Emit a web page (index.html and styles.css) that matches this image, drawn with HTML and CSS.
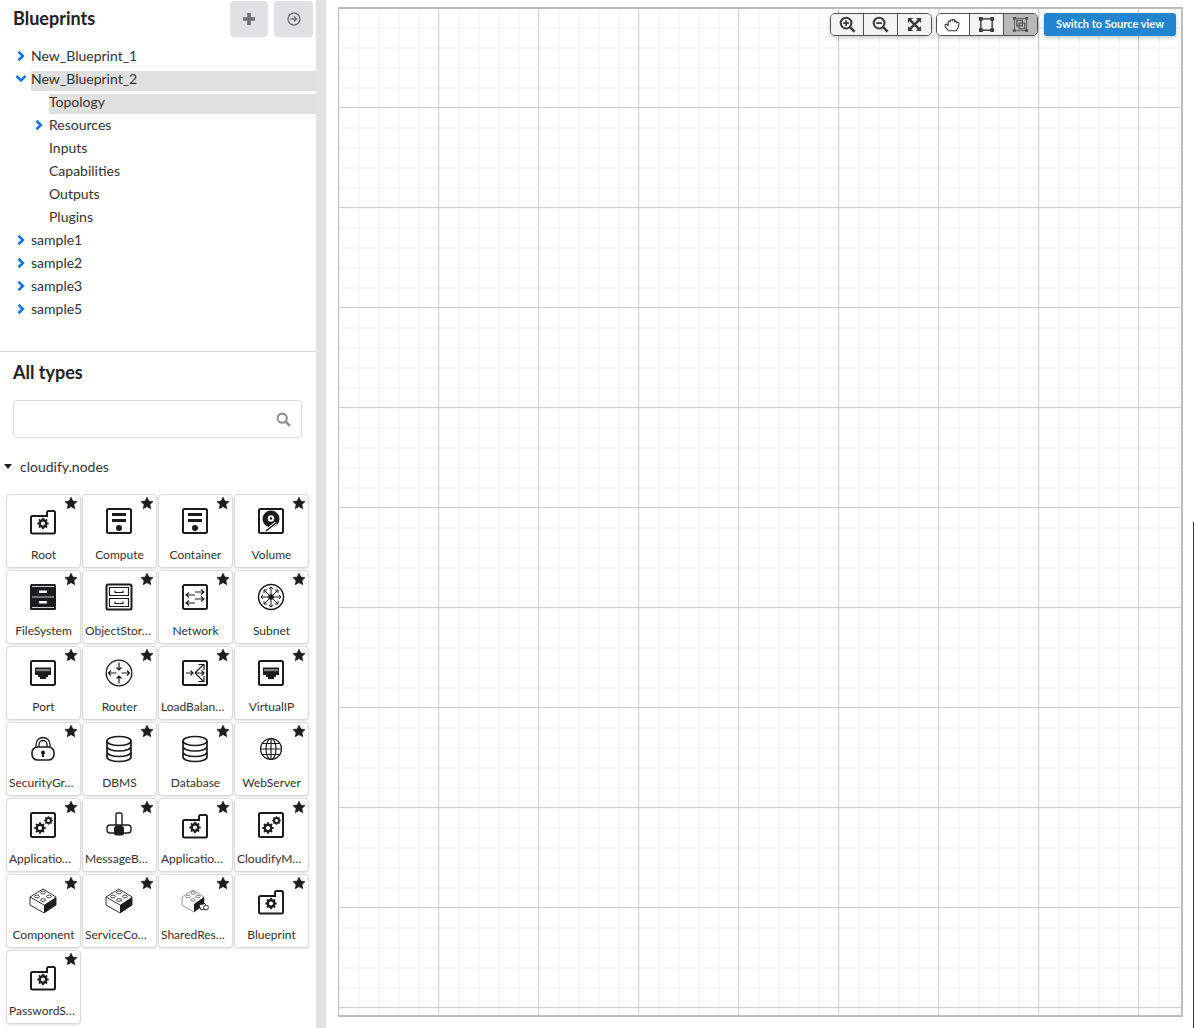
FILE: index.html
```html
<!DOCTYPE html>
<html lang="en">
<head>
    <meta charset="UTF-8">
    <title>Blueprints</title>
    <link rel="stylesheet" href="styles.css">
</head>
<body>
    <svg class="defs" width="0" height="0">
        <defs>
            <symbol id="star" viewBox="0 0 14 14"><path d="M7 1.200 8.800 5.100l4.200.5-3.100 2.900.8 4.200L7 10.600l-3.700 2.100.8-4.200L1 5.600l4.200-.5z" fill="#1b1c1d" stroke="#1b1c1d" stroke-width=".7" stroke-linejoin="round"/></symbol>
            <symbol id="chev-r" viewBox="0 0 10 12"><path d="M2.500 1.800 6.800 6l-4.300 4.200" fill="none" stroke="#1078e0" stroke-width="2.600"/></symbol>
            <symbol id="chev-d" viewBox="0 0 12 10"><path d="M1.500 2 6 6.500 10.500 2" fill="none" stroke="#1078e0" stroke-width="2.600"/></symbol>
            <symbol id="gear" viewBox="0 0 12 12"><circle cx="6" cy="6" r="3" fill="none" stroke="#1b1c1d" stroke-width="2.200"/><path d="M6 .8v2M6 9.200v2M.8 6h2M9.200 6h2M2.300 2.300l1.500 1.500M8.200 8.200l1.500 1.500M2.300 9.700l1.500-1.500M8.200 3.800l1.500-1.500" stroke="#1b1c1d" stroke-width="1.700"/></symbol>
            <symbol id="i-folder" viewBox="0 0 28 28"><path d="M2 10.500Q2 9 3.500 9H18V5.500Q18 4 19.500 4h5Q26 4 26 5.500v20q0 1-1.500 1h-21Q2 26.500 2 25z" fill="none" stroke="#1b1c1d" stroke-width="2"/><use href="#gear" x="7.500" y="10" width="13" height="13"/></symbol>
            <symbol id="i-compute" viewBox="0 0 28 28"><rect x="2" y="2" width="24" height="24" rx="1.500" fill="none" stroke="#1b1c1d" stroke-width="2"/><path d="M7 6h14v3H7zM7 12h14v3H7z" fill="#1b1c1d"/><circle cx="14" cy="21" r="3" fill="#1b1c1d"/></symbol>
            <symbol id="i-volume" viewBox="0 0 28 28"><rect x="2" y="2" width="24" height="24" rx="1.500" fill="none" stroke="#1b1c1d" stroke-width="2"/><circle cx="14" cy="12" r="8.500" fill="#1b1c1d"/><circle cx="14" cy="11.500" r="3.200" fill="#fff"/><circle cx="14" cy="11.500" r="1.200" fill="#1b1c1d"/><path d="M19 16 9 24" stroke="#fff" stroke-width="3.400"/><path d="M19 16 9 24" stroke="#1b1c1d" stroke-width="1.600"/></symbol>
            <symbol id="i-files" viewBox="0 0 28 28"><rect x="1" y="1" width="26" height="26" rx="1.500" fill="#1b1c1d"/><path d="M3 3.500h22M3 14h22M3 24.500h22" stroke="#fff" stroke-width=".8"/><path d="M10 7.500h8V10h-8zM10 18h8v2.500h-8z" fill="#fff"/></symbol>
            <symbol id="i-store" viewBox="0 0 28 28"><rect x="1.500" y="1.500" width="25" height="25" rx="1.500" fill="none" stroke="#1b1c1d" stroke-width="2"/><path d="M4.500 4.500h19v8h-19zM4.500 15.500h19v8h-19z" fill="none" stroke="#1b1c1d" stroke-width="1.200"/><path d="M10 7.500v2h8v-2M10 18.500v2h8v-2" fill="none" stroke="#1b1c1d" stroke-width="1.200"/></symbol>
            <symbol id="i-network" viewBox="0 0 28 28"><rect x="2" y="2" width="24" height="24" rx="1.500" fill="none" stroke="#1b1c1d" stroke-width="2"/><path d="M14 9h9M20 6.500 23 9l-3 2.500M14 12H5M8 9.500 5 12l3 2.500M14 16h9M20 13.500l3 2.500-3 2.500M14 20H5M8 17.500 5 20l3 2.500" fill="none" stroke="#1b1c1d" stroke-width="1.100"/></symbol>
            <symbol id="i-subnet" viewBox="0 0 28 28"><circle cx="14" cy="14" r="12.500" fill="none" stroke="#1b1c1d" stroke-width="1.500"/><circle cx="14" cy="14" r="2.800" fill="#1b1c1d"/><path d="M14 4v20M4 14h20M7 7l14 14M21 7 7 21M12 6l2-2 2 2M12 22l2 2 2-2M6 12l-2 2 2 2M22 12l2 2-2 2M7 10V7h3M21 10V7h-3M7 18v3h3M21 18v3h-3" fill="none" stroke="#1b1c1d"/></symbol>
            <symbol id="i-port" viewBox="0 0 28 28"><rect x="2" y="2" width="24" height="24" rx="1.500" fill="none" stroke="#1b1c1d" stroke-width="2"/><path d="M6 8.500h16v7.500h-3v2h-2v2h-6v-2H9v-2H6z" fill="#1b1c1d"/><path d="M8 10v2.200M10 10v2.200M12 10v2.200M14 10v2.200M16 10v2.200M18 10v2.200M20 10v2.200" stroke="#fff" stroke-width=".9"/></symbol>
            <symbol id="i-router" viewBox="0 0 28 28"><circle cx="14" cy="14" r="12.800" fill="none" stroke="#1b1c1d" stroke-width="1.300"/><path d="M14 3.500V11M11.500 8.500 14 11l2.500-2.500M14 24.500V17M11.500 19.500 14 17l2.500 2.500M11.500 14H3.500M6 11.500 3.500 14 6 16.500M16.500 14h8M22 11.500l2.500 2.500-2.500 2.500" fill="none" stroke="#1b1c1d" stroke-width="1.200"/></symbol>
            <symbol id="i-lb" viewBox="0 0 28 28"><rect x="2" y="2" width="24" height="24" rx="1.500" fill="none" stroke="#1b1c1d" stroke-width="2"/><path d="M5 14h7M9.500 11.500 12 14l-2.500 2.500M14 14l8-8M17.500 5.500H23V11M14 14h9M20.500 11.500 23 14l-2.500 2.500M14 14l8 8M17.500 22.500H23V17" fill="none" stroke="#1b1c1d" stroke-width="1.200"/></symbol>
            <symbol id="i-lock" viewBox="0 0 28 28"><rect x="3" y="12" width="22" height="13" rx="5.500" fill="none" stroke="#1b1c1d" stroke-width="1.600"/><path d="M7 12V9.500a7 7 0 0 1 14 0V12M10 12V9.500a4 4 0 0 1 8 0V12" fill="none" stroke="#1b1c1d" stroke-width="1.300"/><circle cx="14" cy="17.500" r="2" fill="#1b1c1d"/><path d="M13 18h2v4h-2z" fill="#1b1c1d"/></symbol>
            <symbol id="i-db" viewBox="0 0 28 28"><g fill="none" stroke="#1b1c1d" stroke-width="1.700"><ellipse cx="14" cy="6" rx="12" ry="4.500"/><path d="M2 6v16c0 2.500 5.400 4.500 12 4.500S26 24.500 26 22V6M2 11.500c0 2.500 5.400 4.500 12 4.500s12-2 12-4.500M2 17c0 2.500 5.400 4.500 12 4.500S26 19.500 26 17"/></g></symbol>
            <symbol id="i-web" viewBox="0 0 28 28"><g fill="none" stroke="#1b1c1d" stroke-width="1.200"><circle cx="14" cy="14" r="10.500"/><ellipse cx="14" cy="14" rx="5" ry="10.500"/><path d="M14 3.500v21M3.500 14h21M5 8.500h18M5 19.500h18"/></g></symbol>
            <symbol id="i-app" viewBox="0 0 28 28"><rect x="2" y="2" width="24" height="24" rx="1.500" fill="none" stroke="#1b1c1d" stroke-width="2"/><use href="#gear" x="4.500" y="10.500" width="13" height="13"/><use href="#gear" x="14.500" y="4.500" width="10" height="10"/></symbol>
            <symbol id="i-broker" viewBox="0 0 28 28"><rect x="11" y="2" width="6" height="13" rx="1.500" fill="none" stroke="#1b1c1d" stroke-width="1.400"/><rect x="2" y="14" width="24" height="8" rx="3" fill="none" stroke="#1b1c1d" stroke-width="1.400"/><rect x="9" y="15" width="10" height="9.500" rx="2.500" fill="#1b1c1d"/></symbol>
            <symbol id="i-brick" viewBox="0 0 28 28"><path d="M1 10 14 2l13 8v8l-12 8-14-8z" fill="#fff" stroke="#1b1c1d" stroke-width=".9"/><path d="M15 18 27 10v8l-12 8z" fill="#1b1c1d"/><path d="M1 10l14 8" stroke="#1b1c1d" stroke-width=".9"/><g fill="#fff" stroke="#1b1c1d" stroke-width=".8"><ellipse cx="14" cy="5.500" rx="2.400" ry="1.400"/><ellipse cx="8" cy="9.500" rx="2.400" ry="1.400"/><ellipse cx="20" cy="9.500" rx="2.400" ry="1.400"/><ellipse cx="14" cy="13" rx="2.400" ry="1.400"/></g></symbol>
            <symbol id="i-shared" viewBox="0 0 28 28"><path d="M1 10 12 3l11 7v8l-10 7-12-7z" fill="#fff" stroke="#8a8a8a" stroke-width=".9"/><path d="M13 17 23 10v8l-10 7z" fill="#1b1c1d"/><g fill="#fff" stroke="#666" stroke-width=".8"><ellipse cx="12" cy="6" rx="2.300" ry="1.300"/><ellipse cx="7" cy="9.500" rx="2.300" ry="1.300"/><ellipse cx="17" cy="9.500" rx="2.300" ry="1.300"/><ellipse cx="12" cy="13" rx="2.300" ry="1.300"/></g><path d="M18 18l6-1.500 2 5-6 1.500z" fill="#fff" stroke="#1b1c1d" stroke-width=".9"/><circle cx="25" cy="20.500" r="2.400" fill="#fff" stroke="#1b1c1d" stroke-width=".9"/></symbol>
        </defs>
    </svg>

    <div class="layout">
        <aside class="sidebar">
            <section class="blueprints">
                <header class="side-head">
                    <h2>Blueprints</h2>
                    <div class="head-btns">
                        <button class="grey-btn grey-btn-wide">
                            <svg width="14" height="14" viewBox="0 0 14 14"><path d="M5.200 1h3.600v4.200H13v3.600H8.800V13H5.200V8.800H1V5.200h4.200z" fill="#6f7071"/></svg>
                        </button>
                        <button class="grey-btn">
                            <svg width="14" height="14" viewBox="0 0 14 14"><circle cx="7" cy="7" r="6" fill="none" stroke="#6f7071" stroke-width="1.300"/><path d="M3.500 7h6M7 4.500 9.500 7 7 9.500" fill="none" stroke="#6f7071" stroke-width="1.400"/></svg>
                        </button>
                    </div>
                </header>
                <ul class="tree">
                    <li class="tree-row"><svg class="caret"><use href="#chev-r"/></svg><span>New_Blueprint_1</span></li>
                    <li class="tree-row"><svg class="caret caret-open"><use href="#chev-d"/></svg><span class="selected">New_Blueprint_2</span></li>
                    <li class="tree-row child"><span class="selected">Topology</span></li>
                    <li class="tree-row child"><svg class="caret"><use href="#chev-r"/></svg><span>Resources</span></li>
                    <li class="tree-row child"><span>Inputs</span></li>
                    <li class="tree-row child"><span>Capabilities</span></li>
                    <li class="tree-row child"><span>Outputs</span></li>
                    <li class="tree-row child"><span>Plugins</span></li>
                    <li class="tree-row"><svg class="caret"><use href="#chev-r"/></svg><span>sample1</span></li>
                    <li class="tree-row"><svg class="caret"><use href="#chev-r"/></svg><span>sample2</span></li>
                    <li class="tree-row"><svg class="caret"><use href="#chev-r"/></svg><span>sample3</span></li>
                    <li class="tree-row"><svg class="caret"><use href="#chev-r"/></svg><span>sample5</span></li>
                </ul>
            </section>

            <section class="types">
                <h2>All types</h2>
                <div class="search">
                    <input type="text">
                    <svg width="15" height="15" viewBox="0 0 14 14"><circle cx="5.800" cy="5.800" r="4.300" fill="none" stroke="#8c8d8e" stroke-width="1.900"/><path d="M9 9l4 4" stroke="#8c8d8e" stroke-width="2.400"/></svg>
                </div>
                <div class="group-title"><span class="tri"></span>cloudify.nodes</div>
                <div class="type-grid">
                    <div class="type-card"><svg class="fav"><use href="#star"/></svg><svg class="type-icon"><use href="#i-folder"/></svg><span>Root</span></div>
                    <div class="type-card"><svg class="fav"><use href="#star"/></svg><svg class="type-icon"><use href="#i-compute"/></svg><span>Compute</span></div>
                    <div class="type-card"><svg class="fav"><use href="#star"/></svg><svg class="type-icon"><use href="#i-compute"/></svg><span>Container</span></div>
                    <div class="type-card"><svg class="fav"><use href="#star"/></svg><svg class="type-icon"><use href="#i-volume"/></svg><span>Volume</span></div>
                    <div class="type-card"><svg class="fav"><use href="#star"/></svg><svg class="type-icon"><use href="#i-files"/></svg><span>FileSystem</span></div>
                    <div class="type-card"><svg class="fav"><use href="#star"/></svg><svg class="type-icon"><use href="#i-store"/></svg><span class="cut">ObjectStor…</span></div>
                    <div class="type-card"><svg class="fav"><use href="#star"/></svg><svg class="type-icon"><use href="#i-network"/></svg><span>Network</span></div>
                    <div class="type-card"><svg class="fav"><use href="#star"/></svg><svg class="type-icon"><use href="#i-subnet"/></svg><span>Subnet</span></div>
                    <div class="type-card"><svg class="fav"><use href="#star"/></svg><svg class="type-icon"><use href="#i-port"/></svg><span>Port</span></div>
                    <div class="type-card"><svg class="fav"><use href="#star"/></svg><svg class="type-icon"><use href="#i-router"/></svg><span>Router</span></div>
                    <div class="type-card"><svg class="fav"><use href="#star"/></svg><svg class="type-icon"><use href="#i-lb"/></svg><span class="cut">LoadBalan…</span></div>
                    <div class="type-card"><svg class="fav"><use href="#star"/></svg><svg class="type-icon"><use href="#i-port"/></svg><span>VirtualIP</span></div>
                    <div class="type-card"><svg class="fav"><use href="#star"/></svg><svg class="type-icon"><use href="#i-lock"/></svg><span class="cut">SecurityGr…</span></div>
                    <div class="type-card"><svg class="fav"><use href="#star"/></svg><svg class="type-icon"><use href="#i-db"/></svg><span>DBMS</span></div>
                    <div class="type-card"><svg class="fav"><use href="#star"/></svg><svg class="type-icon"><use href="#i-db"/></svg><span>Database</span></div>
                    <div class="type-card"><svg class="fav"><use href="#star"/></svg><svg class="type-icon"><use href="#i-web"/></svg><span>WebServer</span></div>
                    <div class="type-card"><svg class="fav"><use href="#star"/></svg><svg class="type-icon"><use href="#i-app"/></svg><span class="cut">Applicatio…</span></div>
                    <div class="type-card"><svg class="fav"><use href="#star"/></svg><svg class="type-icon"><use href="#i-broker"/></svg><span class="cut">MessageB…</span></div>
                    <div class="type-card"><svg class="fav"><use href="#star"/></svg><svg class="type-icon"><use href="#i-folder"/></svg><span class="cut">Applicatio…</span></div>
                    <div class="type-card"><svg class="fav"><use href="#star"/></svg><svg class="type-icon"><use href="#i-app"/></svg><span class="cut">CloudifyM…</span></div>
                    <div class="type-card"><svg class="fav"><use href="#star"/></svg><svg class="type-icon"><use href="#i-brick"/></svg><span>Component</span></div>
                    <div class="type-card"><svg class="fav"><use href="#star"/></svg><svg class="type-icon"><use href="#i-brick"/></svg><span class="cut">ServiceCo…</span></div>
                    <div class="type-card"><svg class="fav"><use href="#star"/></svg><svg class="type-icon"><use href="#i-shared"/></svg><span class="cut">SharedRes…</span></div>
                    <div class="type-card"><svg class="fav"><use href="#star"/></svg><svg class="type-icon"><use href="#i-folder"/></svg><span>Blueprint</span></div>
                    <div class="type-card"><svg class="fav"><use href="#star"/></svg><svg class="type-icon"><use href="#i-folder"/></svg><span class="cut">PasswordS…</span></div>
                </div>
            </section>
        </aside>

        <div class="splitter"></div>

        <main class="canvas-area">
            <div class="canvas">
                <div class="toolbar">
                    <div class="tool-group">
                        <button class="tool-btn"><svg width="17" height="17" viewBox="0 0 18 18"><circle cx="7.500" cy="7.500" r="5.700" fill="none" stroke="#3c3c3c" stroke-width="2.200"/><path d="M11.500 11.500 16.500 16.500" stroke="#3c3c3c" stroke-width="2.800"/><path d="M4.500 7.500h6M7.500 4.500v6" stroke="#3c3c3c" stroke-width="1.800"/></svg></button>
                        <button class="tool-btn"><svg width="17" height="17" viewBox="0 0 18 18"><circle cx="7.500" cy="7.500" r="5.700" fill="none" stroke="#3c3c3c" stroke-width="2.200"/><path d="M11.500 11.500 16.500 16.500" stroke="#3c3c3c" stroke-width="2.800"/><path d="M4.500 7.500h6" stroke="#3c3c3c" stroke-width="1.800"/></svg></button>
                        <button class="tool-btn"><svg width="15" height="15" viewBox="0 0 16 16"><path d="M3 3l10 10M13 3 3 13" stroke="#3c3c3c" stroke-width="2.600"/><path d="M1 1h5.500L1 6.500zM15 1v5.500L9.500 1zM1 15V9.500L6.500 15zM15 15H9.500L15 9.500z" fill="#3c3c3c"/></svg></button>
                    </div>
                    <div class="tool-group">
                        <button class="tool-btn tool-btn-plain"><svg width="18" height="15" viewBox="0 0 18 15"><path d="M4.500 13.800C3.500 12 1 10.500 1 8.500c0-1.500 1.500-1.700 2.500-.7l.7.700V5c0-1.300 2-1.300 2 0V3.700c0-1.300 2.200-1.300 2.200 0v-.4c0-1.300 2.200-1.300 2.200 0V5c0-1.200 2-1.200 2 0v1c.2-1 2.400-1 2.400.5 0 3-1 5.200-2.500 7.300z" fill="none" stroke="#3c3c3c" stroke-width="1.100" stroke-linejoin="round"/></svg></button>
                        <button class="tool-btn"><svg width="17" height="17" viewBox="0 0 18 18"><rect x="3" y="3" width="12" height="12" fill="none" stroke="#3c3c3c" stroke-width="1.500"/><path d="M1 1h4v4H1zM13 1h4v4h-4zM1 13h4v4H1zM13 13h4v4h-4z" fill="#3c3c3c"/></svg></button>
                        <button class="tool-btn tool-btn-active"><svg width="17" height="17" viewBox="0 0 18 18"><rect x="2.500" y="2.500" width="13" height="13" fill="none" stroke="#555" stroke-width="1"/><rect x="5" y="4.500" width="6" height="6" fill="none" stroke="#555" stroke-width="1.300"/><rect x="7.500" y="7.500" width="6" height="6" fill="none" stroke="#555" stroke-width="1.300"/><path d="M1 1h3v3H1zM14 1h3v3h-3zM1 14h3v3H1zM14 14h3v3h-3z" fill="#555"/></svg></button>
                    </div>
                    <button class="source-btn">Switch to Source view</button>
                </div>
            </div>
        </main>

        <div class="scroll-line"></div>
    </div>
</body>
</html>
```

FILE: styles.css
```css
* {
    box-sizing: border-box;
}

html, body {
    height: 100%;
}

body {
    margin: 0;
    font-family: 'Lato', sans-serif;
    font-size: 14px;
    color: #333;
    background: #fff;
    overflow: hidden;
}

.defs {
    display: block;
    height: 0;
}

.layout {
    display: flex;
    height: 1028px;
    position: relative;
}

.sidebar {
    width: 316px;
    flex: none;
}

h2 {
    margin: 0;
    font-size: 18px;
    font-weight: 700;
    color: #212223;
}

.blueprints {
    height: 352px;
    padding-top: 1px;
    border-bottom: 1px solid #d9d9d9;
}

.side-head {
    display: flex;
    align-items: center;
    justify-content: space-between;
    height: 36px;
    padding: 0 3px 0 13px;
}

.side-head h2 {
    padding-bottom: 2px;
}

.head-btns {
    display: flex;
    gap: 6px;
}

.grey-btn {
    width: 39px;
    height: 36px;
    padding: 0;
    display: flex;
    align-items: center;
    justify-content: center;
    border: none;
    border-radius: 4px;
    background: #e0e1e2;
}

.grey-btn-wide {
    width: 38px;
}

.tree {
    list-style: none;
    margin: 0;
    padding: 8px 0 0;
}

.tree-row {
    position: relative;
    height: 23px;
    padding-left: 31px;
    display: flex;
}

.tree-row span {
    flex: 1;
    align-self: flex-end;
    height: 20px;
    line-height: 15px;
    color: #333;
}

.tree-row.child {
    padding-left: 49px;
}

.tree-row .selected {
    background: #e0e0e0;
}

.caret {
    position: absolute;
    left: 16px;
    top: 5px;
    width: 10px;
    height: 12px;
}

.caret-open {
    left: 15px;
    top: 6px;
    width: 12px;
    height: 10px;
}

.child .caret {
    left: 34px;
}

.types {
    padding-top: 9px;
}

.types h2 {
    padding-left: 13px;
    line-height: 22px;
}

.search {
    position: relative;
    margin: 17px 14px 0 13px;
}

.search input {
    display: block;
    width: 100%;
    height: 38px;
    border: 1px solid #dcdddd;
    border-radius: 4px;
    outline: none;
}

.search svg {
    position: absolute;
    right: 11px;
    top: 12px;
}

.group-title {
    display: flex;
    align-items: center;
    margin-top: 18px;
    padding-left: 4px;
    height: 20px;
    color: #333;
}

.tri {
    width: 0;
    height: 0;
    margin-right: 8px;
    border-left: 4.500px solid transparent;
    border-right: 4.500px solid transparent;
    border-top: 5px solid #1b1c1d;
}

.type-grid {
    display: grid;
    grid-template-columns: repeat(4, 75px);
    grid-auto-rows: 74px;
    gap: 2px 1px;
    margin-top: 18px;
    padding-left: 6px;
}

.type-card {
    position: relative;
    display: flex;
    flex-direction: column;
    align-items: center;
    padding-top: 12px;
    border: 1px solid #dcdcdc;
    border-radius: 4px;
    box-shadow: 0 1px 2px rgba(0, 0, 0, 0.12);
    background: #fff;
}

.type-card span {
    margin-top: 13px;
    font-size: 12px;
    line-height: 14px;
    white-space: nowrap;
    color: #333;
}

/* shortened names start at the card padding instead of being centred */
.type-card .cut {
    align-self: flex-start;
    margin-left: 2px;
}

.type-icon {
    width: 28px;
    height: 28px;
    margin-left: -1px;
}

.fav {
    position: absolute;
    top: 1px;
    right: 2px;
    width: 14px;
    height: 14px;
}

.splitter {
    width: 10px;
    flex: none;
    background: #e2e2e2;
}

.canvas-area {
    flex: 1;
    padding: 7px 11px 11px 12px;
}

.canvas {
    position: relative;
    width: 845px;
    height: 1010px;
    border: 1px solid #bdbdbd;
    border-width: 2px 2px 2px 1px;
    background-color: #fff;
    background-image:
        linear-gradient(#d0d0d0 1px, transparent 1px),
        linear-gradient(90deg, #d0d0d0 1px, transparent 1px),
        linear-gradient(#f7f7f7 2px, transparent 2px),
        linear-gradient(90deg, #f7f7f7 2px, transparent 2px);
    background-size: 100px 100px, 100px 100px, 20px 20px, 20px 20px;
    background-position: -1px -2px, -1px -2px, -1px -2px, -1px -2px;
}

.toolbar {
    position: absolute;
    top: 4px;
    right: 5px;
    display: flex;
    align-items: flex-start;
}

.tool-group {
    display: flex;
    height: 23px;
    margin-right: 4px;
    border: 1px solid #505050;
    border-radius: 5px;
    background: #f4f4f4;
    box-shadow: 0 2px 4px rgba(0, 0, 0, 0.2);
    overflow: hidden;
}

.tool-btn {
    width: 34px;
    padding: 0;
    display: flex;
    align-items: center;
    justify-content: center;
    border: none;
    border-left: 1px solid #505050;
    background: #f4f4f4;
}

.tool-btn:first-child {
    width: 32px;
    border-left: none;
}

.tool-btn-plain {
    background: #fff;
}

.tool-btn-active {
    background: #b9b9b9;
}

.source-btn {
    height: 23px;
    width: 132px;
    margin-left: 2px;
    padding: 0 0 2px;
    border: none;
    border-radius: 3px;
    font-family: 'Lato', sans-serif;
    font-size: 11px;
    font-weight: 700;
    color: #fff;
    background: #2185d0;
    box-shadow: 0 2px 4px rgba(0, 0, 0, 0.2);
}

.scroll-line {
    position: absolute;
    right: 0;
    top: 522px;
    bottom: 0;
    width: 1px;
    background: #333;
}
```
